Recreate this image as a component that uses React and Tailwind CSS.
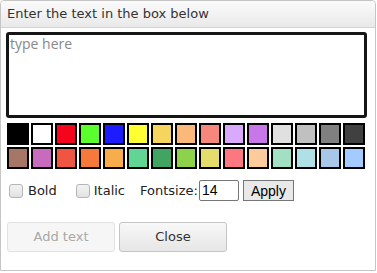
import React from 'react';

const row1 = ['#000000', '#ffffff', '#f5051c', '#5cff2e', '#1c1cff', '#ffff33', '#f5d55f', '#fab97a', '#f5877c', '#d9aafc', '#c877e8', '#e0e0e0', '#c0c0c0', '#808080', '#404040'];
const row2 = ['#a67766', '#c86bbf', '#ef5540', '#f6783a', '#f7ad4c', '#61d594', '#40a463', '#8cd24b', '#e4dc6b', '#fc7780', '#fecb9c', '#a2e0c4', '#aee0e6', '#a7c6e8', '#a4cbff'];

const Swatch = ({ color }) => (
  <div className="w-[22px] h-[22px] border-2 border-black" style={{ backgroundColor: color }} />
);

export default function App() {
  return (
    <div className="w-[377px] h-[273px] bg-white font-['DejaVu_Sans',Verdana,sans-serif]">
      <div className="w-[376px] h-[271px] border border-[#c5c5c5] rounded-t-[4px] flex flex-col">
        <div className="h-[27px] border-b border-[#d3d3d3] bg-gradient-to-b from-[#fbfbfb] to-[#e9e9e9] rounded-t-[4px] px-[6px] flex items-center text-[13px] text-[#333]">
          Enter the text in the box below
        </div>
        <div className="px-[5px] pt-[4px]">
          <textarea
            placeholder="type here"
            className="block w-[361px] h-[86px] border-[3px] border-[#151515] rounded-[3px] px-[1px] py-0 resize-none outline-none text-[14px] font-['Open_Sans',sans-serif] placeholder:text-[#888] leading-[18px]"
          />
          <div className="mt-[5px] ml-[1px] flex flex-col gap-[2px]">
            <div className="flex gap-[2px]">
              {row1.map((c) => <Swatch key={c} color={c} />)}
            </div>
            <div className="flex gap-[2px]">
              {row2.map((c) => <Swatch key={c} color={c} />)}
            </div>
          </div>
          <div className="mt-[11px] flex items-center text-[13px] text-[#222] h-[21px]">
            <span className="ml-[3px] w-[14px] h-[14px] rounded-[3px] border border-[#b5b5b5] bg-gradient-to-b from-[#f3f3f3] to-[#e2e2e2]" />
            <span className="ml-[5px]">Bold</span>
            <span className="ml-[19px] w-[14px] h-[14px] rounded-[3px] border border-[#b5b5b5] bg-gradient-to-b from-[#f3f3f3] to-[#e2e2e2]" />
            <span className="ml-[4px]">Italic</span>
            <span className="ml-[15px]">Fontsize:</span>
            <input
              defaultValue="14"
              className="ml-[1px] w-[40px] h-[21px] border border-[#767676] rounded-[2px] px-[2px] text-[14px] font-['Liberation_Sans',Arial,sans-serif] text-black outline-none"
            />
            <button className="ml-[4px] w-[51px] h-[21px] px-0 border border-[#767676] bg-[#e9e9e9] text-[14px] font-['Liberation_Sans',Arial,sans-serif] text-black">
              Apply
            </button>
          </div>
          <div className="mt-[21px] ml-[1px] flex gap-[4px]">
            <button className="w-[108px] h-[30px] rounded-[3px] border border-[#e2e2e2] bg-[#f6f6f6] text-[13px] text-[#a8a8a8]">
              Add text
            </button>
            <button className="w-[108px] h-[30px] rounded-[3px] border border-[#c5c5c5] bg-gradient-to-b from-[#f8f8f8] to-[#e6e6e6] text-[13px] text-[#333]">
              Close
            </button>
          </div>
        </div>
      </div>
    </div>
  );
}
